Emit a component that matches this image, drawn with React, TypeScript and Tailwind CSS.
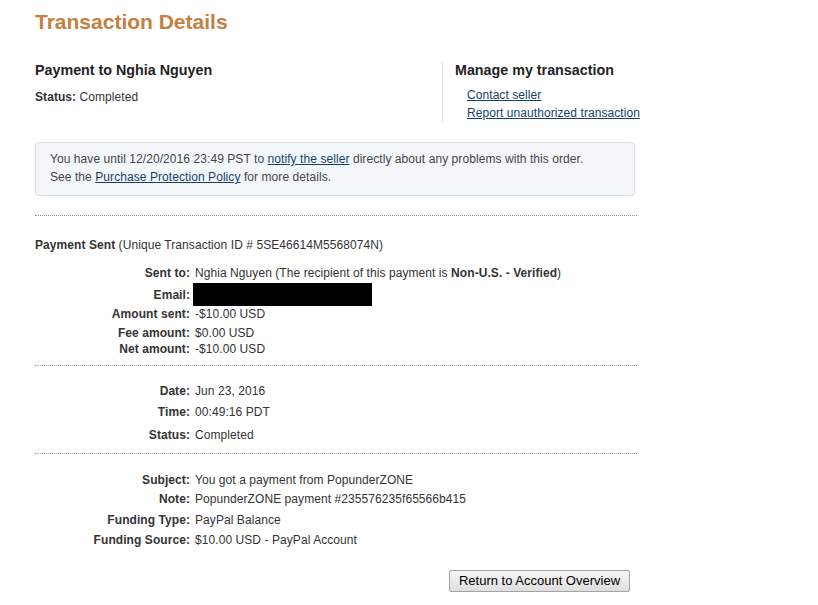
const rowLabel = "w-[160px] shrink-0 text-right font-bold pr-[5px]";

function Row({
  label,
  children,
  className,
}: {
  label: string;
  children: React.ReactNode;
  className: string;
}) {
  return (
    <div className={"flex items-center " + className}>
      <div className={rowLabel}>{label}</div>
      <div>{children}</div>
    </div>
  );
}

function Dots({ className }: { className: string }) {
  return <div className={"w-[602px] border-t border-dotted border-[#9a9a9a] " + className} />;
}

export default function App() {
  return (
    <div className="min-h-[605px] bg-white pl-[35px] font-['Liberation_Sans',Arial,sans-serif] text-[12px] tracking-[0.07px] text-[#333]">
      <h1 className="pt-[10px] text-[21px] font-bold leading-[24px] tracking-normal text-[#c57f3f]">
        Transaction Details
      </h1>

      <div className="mt-[28px] flex">
        <div className="w-[407px]">
          <div className="h-[16px] text-[14.3px] font-bold leading-[16px] tracking-normal text-[#222]">
            Payment to Nghia Nguyen
          </div>
          <div className="mt-[11px] h-[16px] leading-[16px]">
            <span className="font-bold">Status:</span> Completed
          </div>
        </div>
        <div className="h-[61px] border-l border-[#dcdcdc] pl-[12px]">
          <div className="h-[16px] text-[14.3px] font-bold leading-[16px] tracking-normal text-[#222]">
            Manage my transaction
          </div>
          <div className="pl-[12px]">
            <a href="#" className="mt-[9px] block h-[16px] leading-[16px] text-[#17406d] underline">
              Contact seller
            </a>
            <a href="#" className="mt-[2px] block h-[16px] leading-[16px] text-[#17406d] underline">
              Report unauthorized transaction
            </a>
          </div>
        </div>
      </div>

      <div className="mt-[19px] h-[54px] w-[600px] rounded-[4px] border border-[#d3dde6] bg-[#f4f7fa] pl-[14px] pt-[7px] leading-[18px] text-[#444]">
        <div>
          You have until 12/20/2016 23:49 PST to{" "}
          <a href="#" className="text-[#17406d] underline">
            notify the seller
          </a>{" "}
          directly about any problems with this order.
        </div>
        <div>
          See the{" "}
          <a href="#" className="text-[#17406d] underline">
            Purchase Protection Policy
          </a>{" "}
          for more details.
        </div>
      </div>

      <Dots className="mt-[19px]" />

      <div className="mt-[21px] h-[16px] leading-[16px]">
        <span className="font-bold">Payment Sent</span> (Unique Transaction ID # 5SE46614M5568074N)
      </div>

      <Row label="Sent to:" className="mt-[12px] h-[16px]">
        Nghia Nguyen (The recipient of this payment is <span className="font-bold">Non-U.S. - Verified</span>)
      </Row>
      <Row label="Email:" className="mt-[2px] h-[23px]">
        <div className="ml-[-2px] h-[23px] w-[179px] bg-black" />
      </Row>
      <Row label="Amount sent:" className="h-[16px]">
        -$10.00 USD
      </Row>
      <Row label="Fee amount:" className="mt-[3px] h-[16px]">
        $0.00 USD
      </Row>
      <Row label="Net amount:" className="h-[16px]">
        -$10.00 USD
      </Row>

      <Dots className="mt-[8px]" />

      <Row label="Date:" className="mt-[17px] h-[16px]">
        Jun 23, 2016
      </Row>
      <Row label="Time:" className="mt-[5px] h-[16px]">
        00:49:16 PDT
      </Row>
      <Row label="Status:" className="mt-[7px] h-[16px]">
        Completed
      </Row>

      <Dots className="mt-[10px]" />

      <Row label="Subject:" className="mt-[18px] h-[16px]">
        You got a payment from PopunderZONE
      </Row>
      <Row label="Note:" className="mt-[3px] h-[16px]">
        PopunderZONE payment #235576235f65566b415
      </Row>
      <Row label="Funding Type:" className="mt-[5px] h-[16px]">
        PayPal Balance
      </Row>
      <Row label="Funding Source:" className="mt-[4px] h-[16px]">
        $10.00 USD - PayPal Account
      </Row>

      <div className="mt-[22px] flex w-[595px] justify-end">
        <button className="h-[22px] w-[181px] rounded-[2px] border border-[#a3a3a3] bg-gradient-to-b from-[#f7f7f7] to-[#dedede] text-[13px] leading-[20px] tracking-normal text-black">
          Return to Account Overview
        </button>
      </div>
    </div>
  );
}
